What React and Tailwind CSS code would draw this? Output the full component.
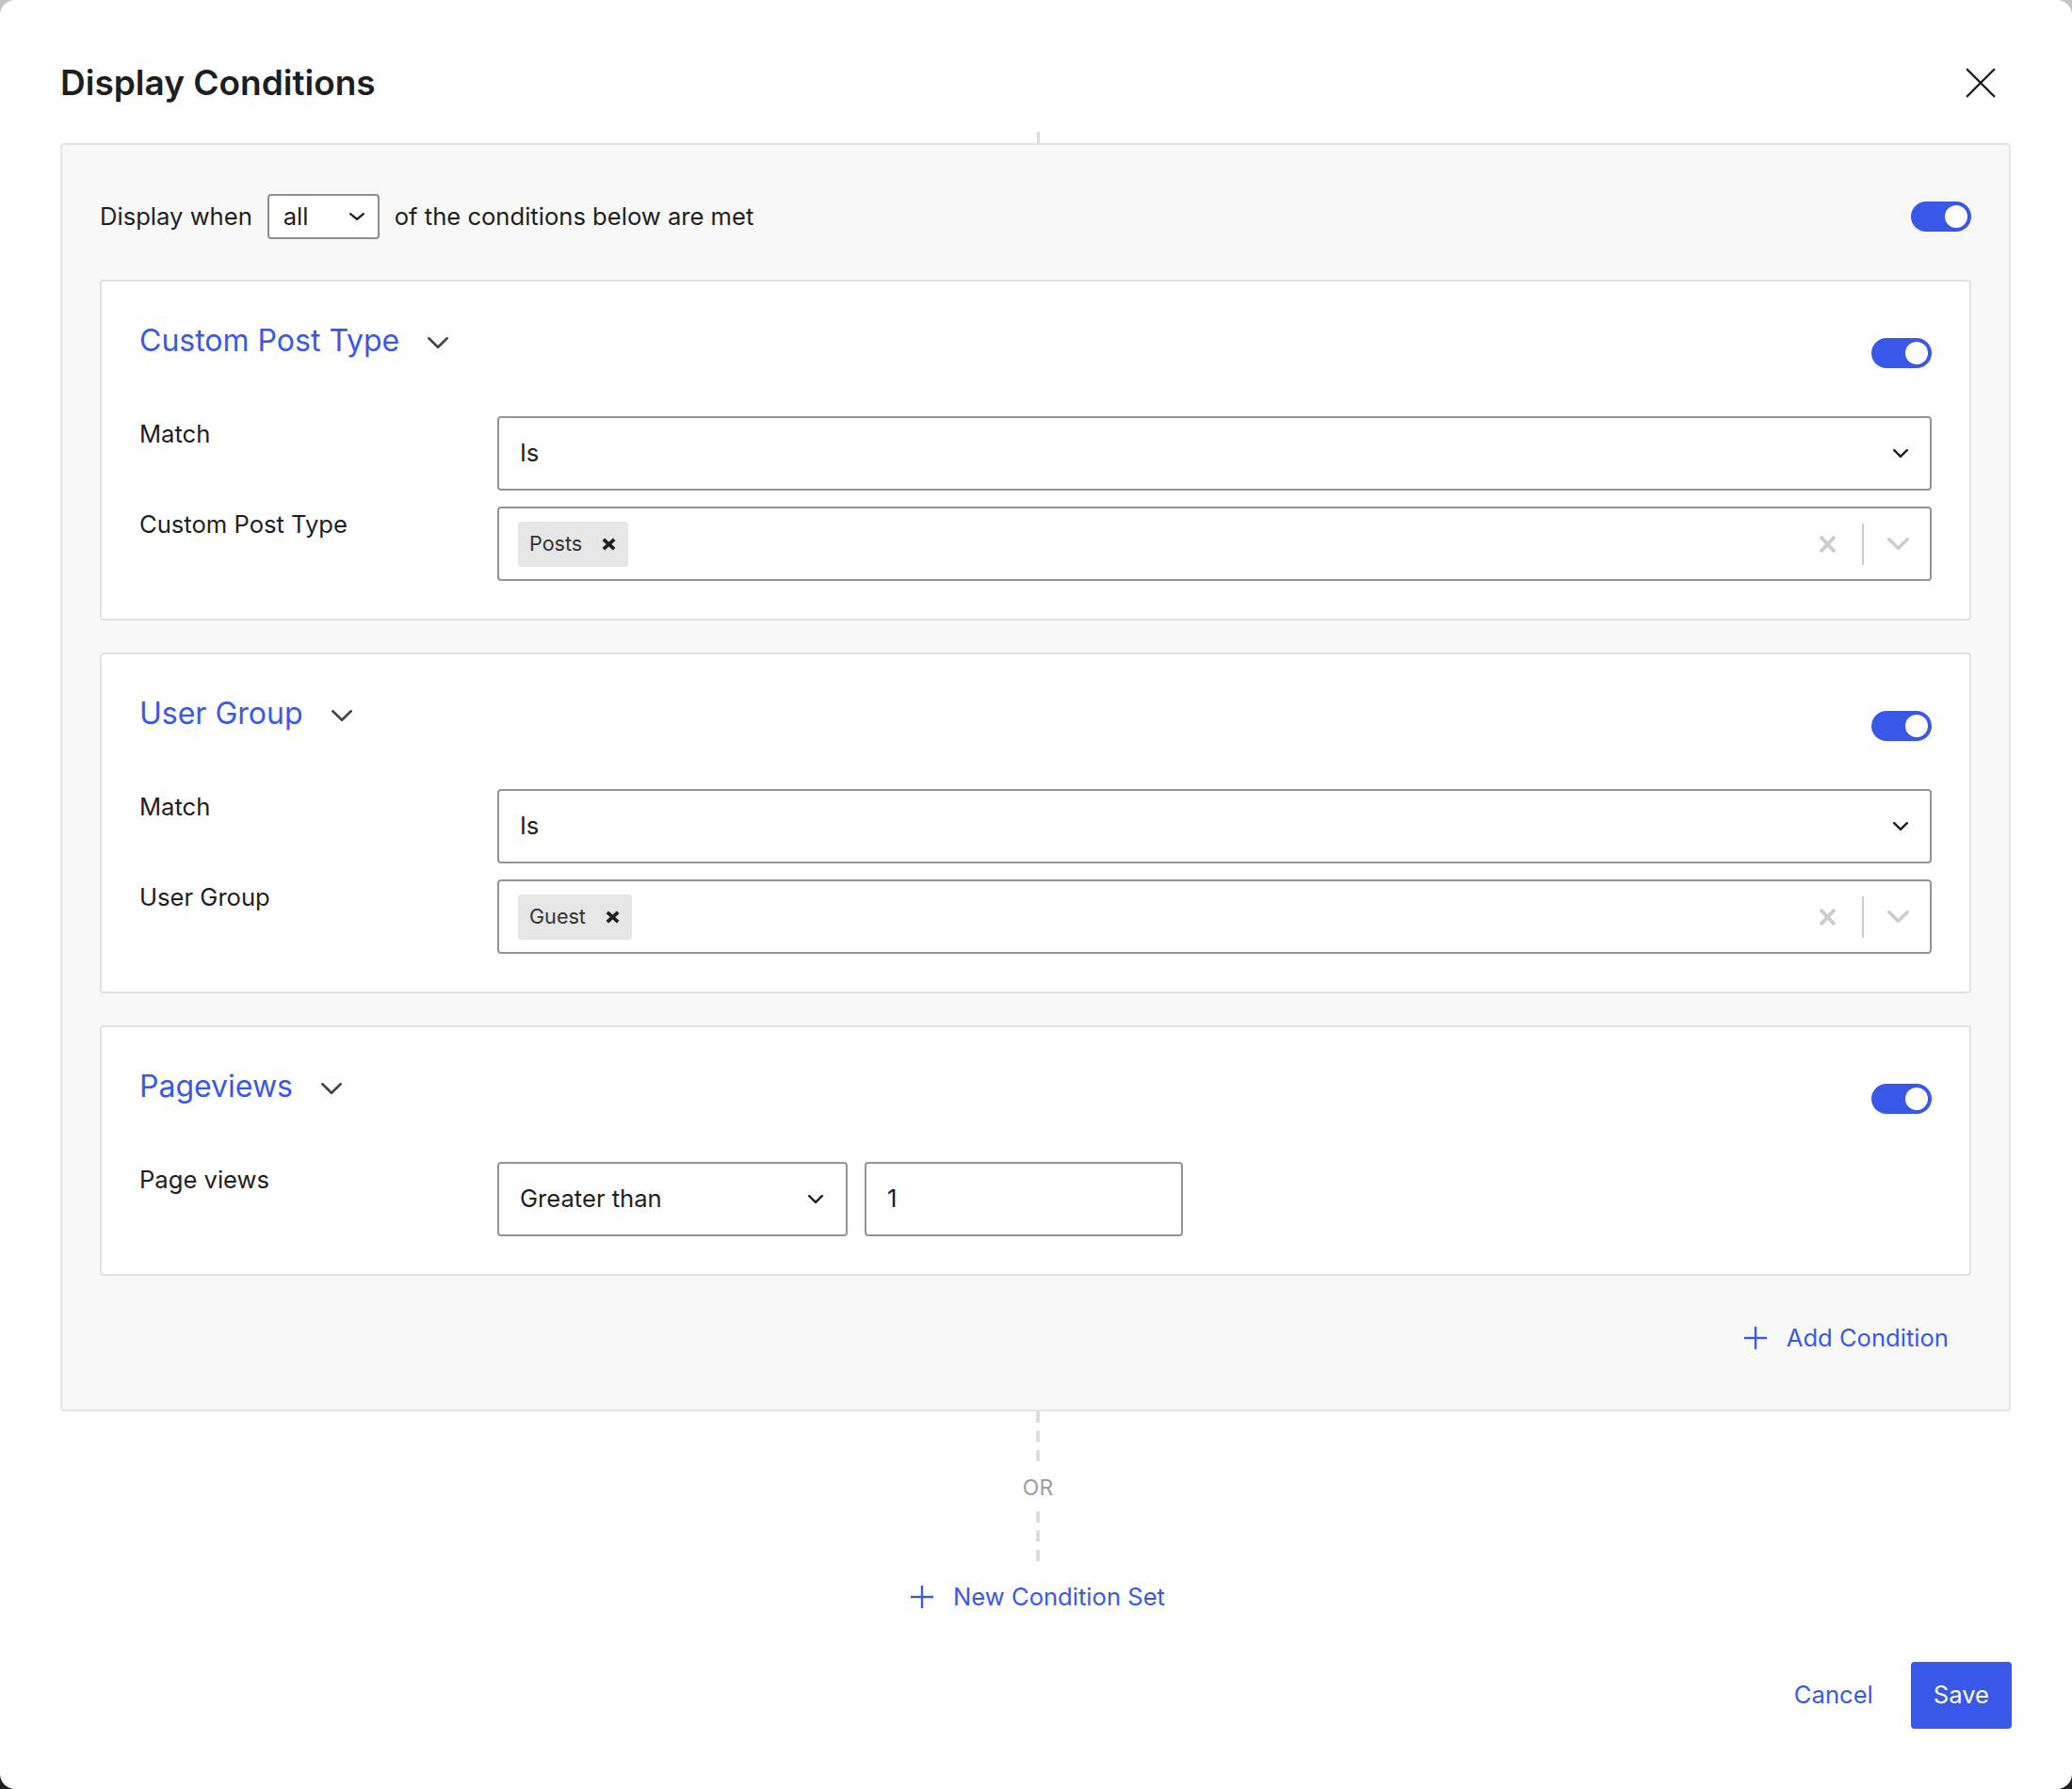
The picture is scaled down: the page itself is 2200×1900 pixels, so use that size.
import React from 'react';

const Chevron = ({ w, h, sw = 2.5, className = '' }) => (
  <svg width={w} height={h} viewBox={`0 0 ${w} ${h}`} className={className} fill="none" stroke="currentColor" strokeWidth={sw} strokeLinecap="round" strokeLinejoin="round">
    <polyline points={`${sw / 2},${sw / 2} ${w / 2},${h - sw / 2} ${w - sw / 2},${sw / 2}`} />
  </svg>
);

const Cross = ({ w, h, sw = 2, className = '' }) => (
  <svg width={w} height={h} viewBox={`0 0 ${w} ${h}`} className={className} fill="none" stroke="currentColor" strokeWidth={sw} strokeLinecap="butt">
    <line x1={sw / 2} y1={sw / 2} x2={w - sw / 2} y2={h - sw / 2} />
    <line x1={w - sw / 2} y1={sw / 2} x2={sw / 2} y2={h - sw / 2} />
  </svg>
);

const Plus = () => (
  <svg width="24" height="24" viewBox="0 0 24 24" fill="none" stroke="currentColor" strokeWidth="2.4">
    <line x1="12" y1="0" x2="12" y2="24" />
    <line x1="0" y1="12" x2="24" y2="12" />
  </svg>
);

const Dashes = ({ h }) => (
  <svg width="4" height={h} viewBox={`0 0 4 ${h}`}>
    <line x1="2" y1="0" x2="2" y2={h} stroke="#d8d8d8" strokeWidth="3.5" strokeDasharray="12 8.5" />
  </svg>
);

const Toggle = ({ className = '' }) => (
  <div className={`flex h-[32px] w-[64px] shrink-0 items-center justify-end rounded-full bg-[#3858e9] pr-[4px] ${className}`}>
    <div className="h-[24px] w-[24px] rounded-full bg-white" />
  </div>
);

const Select = ({ value, className = '' }) => (
  <div className={`flex h-[79px] items-center justify-between rounded-[4px] border-2 border-[#949494] bg-white pl-[22px] ${className}`}>
    <span className="text-[25.6px] text-[#1e1e1e]">{value}</span>
    <Chevron w={16} h={9} sw={2.4} className="text-[#1e1e1e]" />
  </div>
);

const MultiSelect = ({ tag }) => (
  <div className="flex h-[79px] items-center justify-between rounded-[4px] border-2 border-[#949494] bg-white pl-[20px] pr-[22px]">
    <div className="flex h-[48px] items-center rounded-[3px] bg-[#e6e6e6]">
      <span className="pl-[12px] pr-[8px] text-[21.6px] text-[#333]">{tag}</span>
      <span className="px-[13px] text-[#1e1e1e]">
        <Cross w={15} h={14} sw={3.6} />
      </span>
    </div>
    <div className="flex items-center text-[#cccccc]">
      <Cross w={19} h={20} sw={4} />
      <div className="ml-[27px] h-[44px] w-[2px] bg-[#cccccc]" />
      <Chevron w={23} h={13} sw={3.6} className="ml-[25px]" />
    </div>
  </div>
);

const Field = ({ label, children }) => (
  <div className="grid grid-cols-[380px_1fr]">
    <div className="text-[25.6px] leading-[37.5px] text-[#1e1e1e]">{label}</div>
    <div>{children}</div>
  </div>
);

const Card = ({ title, children }) => (
  <div className="rounded-[4px] border-2 border-[#e2e2e2] bg-white px-[40px] pt-[39px] pb-[40px]">
    <div className="flex h-[48px] items-start justify-between">
      <div className="flex h-[48px] items-center">
        <span className="text-[32px] leading-[48px] text-[#3858e9]">{title}</span>
        <Chevron w={22} h={12} sw={2.6} className="ml-[30px] mt-[4px] text-[#444]" />
      </div>
      <Toggle className="mt-[21px]" />
    </div>
    <div className="mt-[56px] flex flex-col gap-[17px]">{children}</div>
  </div>
);

export default function App() {
  return (
    <div className="h-[1900px] w-[2200px] bg-linear-to-b from-[#c4c4c4] to-[#1f1f1f] font-['Inter','Noto_Sans',sans-serif]">
      <div className="flex h-[1900px] w-[2200px] flex-col rounded-[16px] bg-white">
        <div className="flex items-center justify-between pt-[61px] pl-[64px] pr-[81px]">
          <h1 className="text-[37px] font-semibold leading-[54px] text-[#1e1e1e]">Display Conditions</h1>
          <Cross w={32} h={32} sw={2.2} className="text-[#1e1e1e]" />
        </div>

        <div className="ml-[64px] flex w-[2071px] justify-center pl-[5px]">
          <div className="mt-[25px] h-[12px] w-[3px] bg-[#dcdcdc]" />
        </div>

        <div className="ml-[64px] w-[2071px] rounded-[4px] border-2 border-[#e4e4e4] bg-[#f8f8f8] px-[40px] pt-[52px] pb-[44px]">
          <div className="flex h-[48px] items-center justify-between">
            <div className="flex items-center gap-[16px] text-[25.6px] text-[#1e1e1e]">
              <span>Display when</span>
              <div className="flex h-[48px] w-[119px] items-center justify-between rounded-[4px] border-2 border-[#8f8f8f] bg-white pl-[15px] pr-[14px]">
                <span>all</span>
                <Chevron w={16} h={8} sw={2.2} />
              </div>
              <span>of the conditions below are met</span>
            </div>
            <Toggle />
          </div>

          <div className="mt-[43px] flex flex-col gap-[34px]">
            <Card title="Custom Post Type">
              <Field label="Match"><Select value="Is" className="pr-[23px]" /></Field>
              <Field label="Custom Post Type"><MultiSelect tag="Posts" /></Field>
            </Card>
            <Card title="User Group">
              <Field label="Match"><Select value="Is" className="pr-[23px]" /></Field>
              <Field label="User Group"><MultiSelect tag="Guest" /></Field>
            </Card>
            <Card title="Pageviews">
              <Field label="Page views">
                <div className="flex gap-[18px]">
                  <Select value="Greater than" className="w-[372px] pr-[24px]" />
                  <div className="flex h-[79px] w-[338px] items-center rounded-[4px] border-2 border-[#949494] bg-white pl-[22px] text-[25.6px] text-[#1e1e1e]">1</div>
                </div>
              </Field>
            </Card>
          </div>

          <div className="mt-[34px] flex justify-end">
            <button className="flex h-[64px] items-center gap-[21px] px-[24px] text-[25.6px] text-[#3858e9]">
              <Plus />
              <span>Add Condition</span>
            </button>
          </div>
        </div>

        <div className="ml-[64px] flex w-[2071px] flex-col items-center pl-[5px]">
          <Dashes h={56} />
          <div className="text-[23px] leading-[50px] text-[#9e9e9e]">OR</div>
          <Dashes h={55} />
          <button className="mt-[12px] flex h-[48px] items-center gap-[21px] text-[25.6px] text-[#3858e9]">
            <Plus />
            <span>New Condition Set</span>
          </button>
        </div>

        <div className="mt-[45px] flex items-center justify-end gap-[40px] pr-[64px]">
          <button className="text-[25.6px] text-[#3858e9]">Cancel</button>
          <button className="h-[71px] rounded-[4px] bg-[#3858e9] px-[24px] text-[25.6px] text-white">Save</button>
        </div>
      </div>
    </div>
  );
}
